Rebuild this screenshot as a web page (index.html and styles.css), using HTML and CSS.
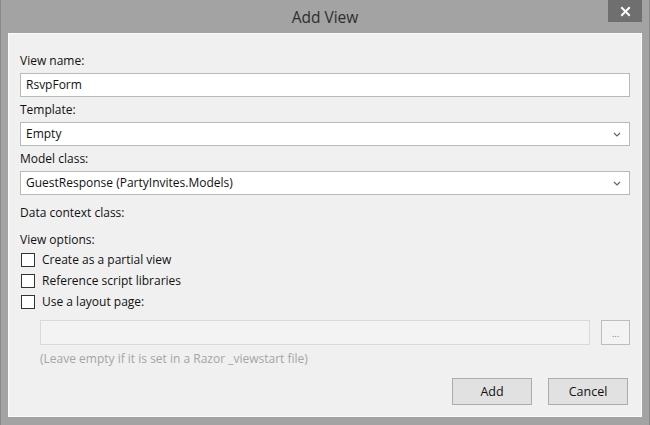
FILE: index.html
```html
<!DOCTYPE html>
<html>
<head>
<meta charset="utf-8">
<link rel="stylesheet" href="styles.css">
</head>
<body>
<div class="window">
  <div class="titlebar">
    <span class="title">Add View</span>
    <div class="close"><svg width="11" height="11" viewBox="0 0 11 11"><path d="M2 2 L9 9 M9 2 L2 9" stroke="#ffffff" stroke-width="2" stroke-linecap="square"/></svg></div>
  </div>
  <div class="panel">
    <div class="label first">View name:</div>
    <div class="field">RsvpForm</div>
    <div class="label">Template:</div>
    <div class="field select"><span>Empty</span><svg class="chev" width="8" height="5" viewBox="0 0 8 5"><path d="M1 1 L4 4 L7 1" fill="none" stroke="#666" stroke-width="1.2"/></svg></div>
    <div class="label">Model class:</div>
    <div class="field select"><span>GuestResponse (PartyInvites.Models)</span><svg class="chev" width="8" height="5" viewBox="0 0 8 5"><path d="M1 1 L4 4 L7 1" fill="none" stroke="#666" stroke-width="1.2"/></svg></div>
    <div class="label gap">Data context class:</div>
    <div class="label gap">View options:</div>
    <div class="check"><span class="box"></span>Create as a partial view</div>
    <div class="check"><span class="box"></span>Reference script libraries</div>
    <div class="check"><span class="box"></span>Use a layout page:</div>
    <div class="layout-row">
      <div class="layout-input"></div>
      <div class="browse">...</div>
    </div>
    <div class="hint">(Leave empty if it is set in a Razor _viewstart file)</div>
    <div class="buttons">
      <div class="btn">Add</div>
      <div class="btn">Cancel</div>
    </div>
  </div>
</div>
</body>
</html>
```

FILE: styles.css
```css
html, body {
  margin: 0;
  padding: 0;
}
body {
  width: 650px;
  height: 425px;
  overflow: hidden;
  font-family: "Open Sans", "Noto Sans", sans-serif;
  font-size: 12px;
  color: #111111;
}
.window {
  width: 650px;
  height: 425px;
  box-sizing: border-box;
  background: #a3a3a3;
  border-left: 1px solid #8a8a8a;
  border-right: 1px solid #8a8a8a;
  display: flex;
  flex-direction: column;
}
.titlebar {
  position: relative;
  height: 33px;
  display: flex;
  align-items: center;
  justify-content: center;
}
.title {
  font-size: 15.5px;
  color: #2e2e2e;
  margin-top: 1px;
}
.close {
  position: absolute;
  top: 0;
  right: 7px;
  width: 34px;
  height: 22px;
  background: #6f6f6f;
  display: flex;
  align-items: center;
  justify-content: center;
}
.panel {
  margin: 0 7px 8px 7px;
  flex: 1;
  background: #f0f0f0;
  border: 1px solid #fafafa;
  padding: 18px 11px 0 11px;
  display: flex;
  flex-direction: column;
}
.label {
  line-height: 18px;
  height: 18px;
  margin-top: 4px;
  margin-bottom: 3px;
}
.label.first {
  margin-top: 0;
}
.label.gap {
  margin-top: 9px;
  margin-bottom: 0;
}
.field {
  height: 24px;
  box-sizing: border-box;
  background: #ffffff;
  border: 1px solid #b9b9b9;
  padding: 0 5px;
  line-height: 22px;
  display: flex;
  align-items: center;
}
.select {
  justify-content: space-between;
}
.chev {
  margin-right: 3px;
}
.check {
  height: 21px;
  display: flex;
  align-items: center;
  padding-left: 1px;
}
.box {
  width: 12px;
  height: 12px;
  border: 1px solid #333333;
  background: #ffffff;
  margin-right: 7px;
}
.layout-row {
  display: flex;
  margin-top: 8px;
  padding-left: 20px;
  gap: 11px;
}
.layout-input {
  flex: 1;
  height: 25px;
  box-sizing: border-box;
  background: #f3f3f3;
  border: 1px solid #d9d9d9;
}
.browse {
  width: 29px;
  height: 25px;
  box-sizing: border-box;
  border: 1px solid #bdbdbd;
  background: #f3f3f3;
  color: #777;
  font-size: 9px;
  display: flex;
  align-items: center;
  justify-content: center;
  padding-top: 1px;
}
.hint {
  padding-left: 20px;
  margin-top: 5px;
  line-height: 18px;
  color: #a5a5a5;
}
.buttons {
  display: flex;
  justify-content: flex-end;
  gap: 16px;
  margin-top: 10px;
  padding-right: 2px;
}
.btn {
  width: 80px;
  height: 27px;
  box-sizing: border-box;
  background: #e1e1e1;
  border: 1px solid #adadad;
  display: flex;
  align-items: center;
  justify-content: center;
  font-size: 12.5px;
}
```
